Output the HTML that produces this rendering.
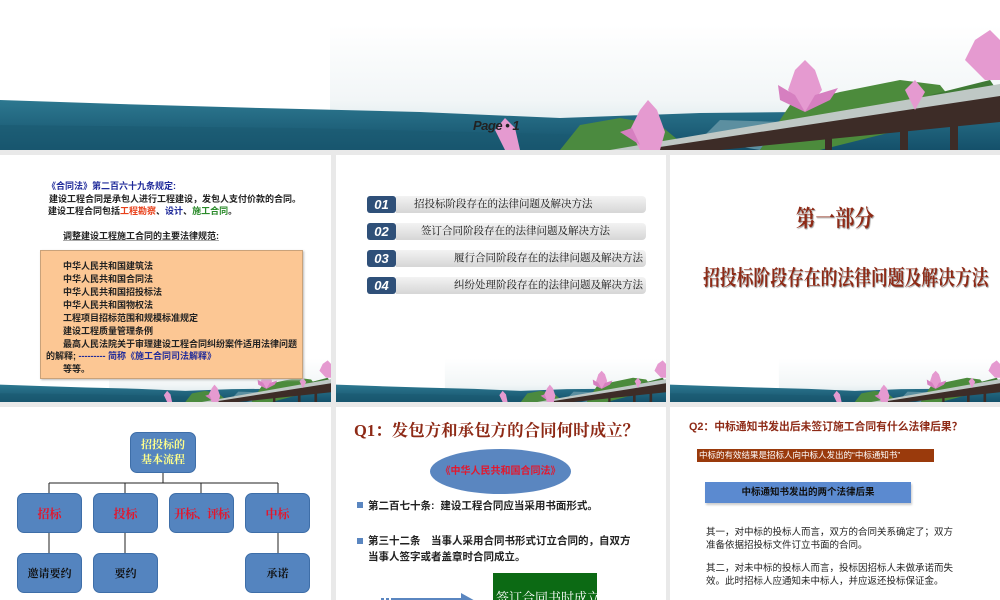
<!DOCTYPE html>
<html><head><meta charset="utf-8">
<style>
*{margin:0;padding:0;box-sizing:border-box}
body{width:1000px;height:600px;background:#e9e9e9;position:relative;overflow:hidden;font-family:"Liberation Sans","Noto Sans CJK SC",sans-serif}
.abs{position:absolute}
.slide{position:absolute;background:#fff;overflow:hidden}
.t{position:absolute;white-space:nowrap}
.serif{font-family:"Liberation Serif","Noto Serif CJK SC",serif}
.s1 .t{font-size:9px;font-weight:bold;color:#222}
.num{position:absolute;width:29px;height:17px;background:#2f5079;border-radius:3px;color:#fff;font-style:italic;font-weight:bold;font-size:13px;line-height:17px;text-align:center;font-family:"Liberation Sans",sans-serif}
.bar{position:absolute;height:17px;background:linear-gradient(#f3f3f3,#d6d6d6);border-radius:0 4px 4px 0;font-size:10.5px;line-height:17px;color:#111;font-family:"Liberation Serif","Noto Serif CJK SC",serif;white-space:nowrap}
.box{position:absolute;background:#5484bf;border:1px solid #3e6ea8;border-radius:7px;text-align:center;font-family:"Liberation Serif","Noto Serif CJK SC",serif;font-weight:bold;font-size:11px}
</style></head><body>
<svg width="0" height="0" style="position:absolute">
<defs>
<linearGradient id="sky" x1="0" y1="0" x2="0" y2="1"><stop offset="0" stop-color="#fff"/><stop offset="0.6" stop-color="#f2f6f7"/><stop offset="1" stop-color="#cfe1e6"/></linearGradient>
<linearGradient id="sea" x1="0" y1="0" x2="0" y2="1"><stop offset="0" stop-color="#2d7890"/><stop offset="1" stop-color="#14506a"/></linearGradient>
<symbol id="deco" viewBox="0 0 1000 150" preserveAspectRatio="none">
<rect x="330" y="25" width="670" height="125" fill="url(#sky)"/>
<path d="M0 100 L120 104 L260 108 L420 112 L560 118 L700 113 L800 112 L1000 110 L1000 150 L0 150Z" fill="url(#sea)"/>
<path d="M0 125 L300 128 L600 135 L600 150 L0 150Z" fill="#1b5a72" opacity=".6"/>
<path d="M560 150 L580 125 L620 118 L660 125 L690 150Z" fill="#4b8a3f"/>
<path d="M700 140 L720 120 L780 122 L760 150Z" fill="#5c8fa0"/>
<path d="M760 150 L790 105 L840 92 L900 80 L940 85 L960 110 L900 130 L820 150Z" fill="#4c8b3c"/>
<path d="M930 95 L990 80 L1000 95 L1000 120 L950 120Z" fill="#3f7a35"/>
<path d="M610 150 L1000 84 L1000 100 L660 150Z" fill="#bfc8c5"/>
<path d="M640 150 L1000 96 L1000 122 L720 150Z" fill="#3d2c27"/>
<rect x="900" y="118" width="8" height="32" fill="#3d2c27"/>
<rect x="950" y="112" width="8" height="38" fill="#3d2c27"/>
<rect x="825" y="130" width="7" height="20" fill="#3d2c27"/>
<g fill="#e59ad0">
<path d="M805 112 L788 90 L795 70 L805 60 L815 70 L822 90Z"/>
<path d="M805 112 L780 100 L778 85 L795 95Z" fill="#d67fc0"/>
<path d="M805 112 L830 100 L838 88 L815 95Z" fill="#d67fc0"/>
<path d="M640 150 L630 130 L640 110 L648 100 L657 110 L665 132 L660 150Z"/>
<path d="M640 145 L620 132 L632 128Z" fill="#d67fc0"/>
<path d="M505 150 L495 130 L505 118 L515 128 L520 150Z"/>
<path d="M985 80 L965 60 L975 40 L990 30 L1000 40 L1000 80Z"/>
<path d="M915 110 L905 90 L915 80 L925 92Z"/>
</g>
</symbol>
</defs>
</svg>

<div class="abs" style="left:0;top:0;width:1000px;height:150px;background:#fff">
<svg width="1000" height="150" style="position:absolute;left:0;top:0"><use href="#deco" width="1000" height="150"/></svg>
<div class="t" style="left:473px;top:118px;font-size:13px;font-style:italic;font-weight:bold;color:#222;letter-spacing:-0.5px">Page • 1</div>
</div>

<div class="slide s1" style="left:0;top:155px;width:331px;height:247px">
<svg width="331" height="52" style="position:absolute;left:0;bottom:0"><use href="#deco" width="331" height="52"/></svg>
<div class="t" style="left:47px;top:24px;color:#1f2a9a">《合同法》第二百六十九条规定:</div>
<div class="t" style="left:49px;top:37px">建设工程合同是承包人进行工程建设，发包人支付价款的合同。</div>
<div class="t" style="left:48px;top:49px">建设工程合同包括<span style="color:#e8401a">工程勘察</span>、<span style="color:#1f2a9a">设计</span>、<span style="color:#2a8a2a">施工合同</span>。</div>
<div class="t" style="left:63px;top:74px;text-decoration:underline;text-decoration-color:#aaa">调整建设工程施工合同的主要法律规范:</div>
<div class="abs" style="left:40px;top:95px;width:263px;height:129px;background:#fcc794;border:1px solid #c9a27a;box-shadow:1px 1px 2px #bbb"></div>
<div class="t" style="left:63px;top:104px">中华人民共和国建筑法</div>
<div class="t" style="left:63px;top:117px">中华人民共和国合同法</div>
<div class="t" style="left:63px;top:130px">中华人民共和国招投标法</div>
<div class="t" style="left:63px;top:143px">中华人民共和国物权法</div>
<div class="t" style="left:63px;top:156px">工程项目招标范围和规模标准规定</div>
<div class="t" style="left:63px;top:169px">建设工程质量管理条例</div>
<div class="t" style="left:63px;top:182px">最高人民法院关于审理建设工程合同纠纷案件适用法律问题</div>
<div class="t" style="left:46px;top:194px">的解释; <span style="color:#1f2a9a">--------- 简称《施工合同司法解释》</span></div>
<div class="t" style="left:63px;top:207px">等等。</div>
</div>

<div class="slide" style="left:336px;top:155px;width:330px;height:247px">
<svg width="330" height="52" style="position:absolute;left:0;bottom:0"><use href="#deco" width="330" height="52"/></svg>
<div class="num" style="left:31px;top:41px">01</div><div class="bar" style="left:60px;top:41px;width:250px;padding-left:18px">招投标阶段存在的法律问题及解决方法</div>
<div class="num" style="left:31px;top:68px">02</div><div class="bar" style="left:60px;top:68px;width:250px;padding-left:25px">签订合同阶段存在的法律问题及解决方法</div>
<div class="num" style="left:31px;top:95px">03</div><div class="bar" style="left:60px;top:95px;width:250px;padding-left:58px">履行合同阶段存在的法律问题及解决方法</div>
<div class="num" style="left:31px;top:122px">04</div><div class="bar" style="left:60px;top:122px;width:250px;padding-left:58px">纠纷处理阶段存在的法律问题及解决方法</div>
</div>

<div class="slide" style="left:670px;top:155px;width:330px;height:247px">
<svg width="330" height="52" style="position:absolute;left:0;bottom:0"><use href="#deco" width="330" height="52"/></svg>
<div class="t" style="left:0;width:330px;text-align:center;top:45px;font-size:23px;font-weight:bold;color:#8e2a16;text-shadow:1px 1px 1px #999;transform:scaleX(0.85);font-family:'Liberation Serif','Noto Serif CJK SC',serif">第一部分</div>
<div class="t" style="left:0;width:330px;text-align:center;top:107px;font-size:21px;font-weight:bold;color:#8e2a16;text-shadow:1px 1px 1px #999;transform:scaleX(0.8);font-family:'Liberation Serif','Noto Serif CJK SC',serif">招投标阶段存在的法律问题及解决方法</div>
</div>

<div class="slide" style="left:0;top:407px;width:331px;height:193px">
<svg width="331" height="193" style="position:absolute;left:0;top:0">
<g stroke="#222" stroke-width="1" fill="none">
<line x1="163" y1="66" x2="163" y2="76"/><line x1="49" y1="76" x2="278" y2="76"/>
<line x1="49" y1="76" x2="49" y2="86"/><line x1="125" y1="76" x2="125" y2="86"/><line x1="201" y1="76" x2="201" y2="86"/><line x1="278" y1="76" x2="278" y2="86"/>
<line x1="49" y1="126" x2="49" y2="146"/><line x1="125" y1="126" x2="125" y2="146"/><line x1="278" y1="126" x2="278" y2="146"/>
</g></svg>
<div class="box" style="left:130px;top:25px;width:66px;height:41px;color:#ffff8a;line-height:15px;padding-top:5px">招投标的<br>基本流程</div>
<div class="box" style="left:17px;top:86px;width:65px;height:40px;line-height:40px;color:#e3162c;font-size:12px">招标</div>
<div class="box" style="left:93px;top:86px;width:65px;height:40px;line-height:40px;color:#e3162c;font-size:12px">投标</div>
<div class="box" style="left:169px;top:86px;width:65px;height:40px;line-height:40px;color:#e3162c;font-size:12px;white-space:nowrap;letter-spacing:-1px">开标、评标</div>
<div class="box" style="left:245px;top:86px;width:65px;height:40px;line-height:40px;color:#e3162c;font-size:12px">中标</div>
<div class="box" style="left:17px;top:146px;width:65px;height:40px;line-height:40px;color:#111">邀请要约</div>
<div class="box" style="left:93px;top:146px;width:65px;height:40px;line-height:40px;color:#111">要约</div>
<div class="box" style="left:245px;top:146px;width:65px;height:40px;line-height:40px;color:#111">承诺</div>
</div>

<div class="slide" style="left:336px;top:407px;width:330px;height:193px">
<div class="t serif" style="left:18px;top:10px;font-size:16.5px;font-weight:bold;color:#8e2a16">Q1：发包方和承包方的合同何时成立？</div>
<div class="abs" style="left:94px;top:42px;width:141px;height:45px;border-radius:50%;background:#5a86c0;text-align:center;line-height:45px;font-size:10px;font-weight:bold;color:#e2182e">《中华人民共和国合同法》</div>
<div class="abs" style="left:21px;top:95px;width:6px;height:6px;background:#5a86c0"></div>
<div class="t" style="left:32px;top:91px;font-size:10.5px;font-weight:bold;color:#222">第二百七十条:&nbsp;&nbsp;建设工程合同应当采用书面形式。</div>
<div class="abs" style="left:21px;top:131px;width:6px;height:6px;background:#5a86c0"></div>
<div class="t" style="left:32px;top:126px;font-size:10.5px;font-weight:bold;color:#222">第三十二条　当事人采用合同书形式订立合同的，自双方</div>
<div class="t" style="left:32px;top:142px;font-size:10.5px;font-weight:bold;color:#222">当事人签字或者盖章时合同成立。</div>
<div class="abs" style="left:157px;top:166px;width:104px;height:30px;background:#0c6a14;color:#fff;font-size:13px;padding:14px 0 0 3px;font-family:'Liberation Serif','Noto Serif CJK SC',serif;white-space:nowrap;overflow:hidden">签订合同书时成立</div>
<svg width="100" height="20" style="position:absolute;left:45px;top:184px"><rect x="0" y="7" width="3" height="13" fill="#5a86c0"/><rect x="5" y="7" width="3" height="13" fill="#5a86c0"/><rect x="10" y="7" width="70" height="13" fill="#5a86c0"/><path d="M80 2 L98 12 L80 22Z" fill="#5a86c0"/></svg>
</div>

<div class="slide" style="left:670px;top:407px;width:330px;height:193px">
<div class="t" style="left:19px;top:11px;font-size:10.8px;font-weight:bold;color:#8e2a16">Q2：中标通知书发出后未签订施工合同有什么法律后果？</div>
<div class="abs" style="left:27px;top:42px;width:237px;height:13px;background:#9a3a0c;color:#fff;font-size:8.5px;line-height:13px;padding-left:2px;white-space:nowrap">中标的有效结果是招标人向中标人发出的“中标通知书”</div>
<div class="abs" style="left:35px;top:75px;width:206px;height:21px;background:#5b8ad0;box-shadow:1px 2px 2px #ccc;text-align:center;line-height:21px;font-size:9.5px;font-weight:bold;color:#111">中标通知书发出的两个法律后果</div>
<div class="t" style="left:36px;top:119px;font-size:9.5px;color:#222;line-height:13px">其一，对中标的投标人而言，双方的合同关系确定了；双方<br>准备依据招投标文件订立书面的合同。</div>
<div class="t" style="left:36px;top:155px;font-size:9.5px;color:#222;line-height:13px">其二，对未中标的投标人而言，投标因招标人未做承诺而失<br>效。此时招标人应通知未中标人，并应返还投标保证金。</div>
</div>
</body></html>
